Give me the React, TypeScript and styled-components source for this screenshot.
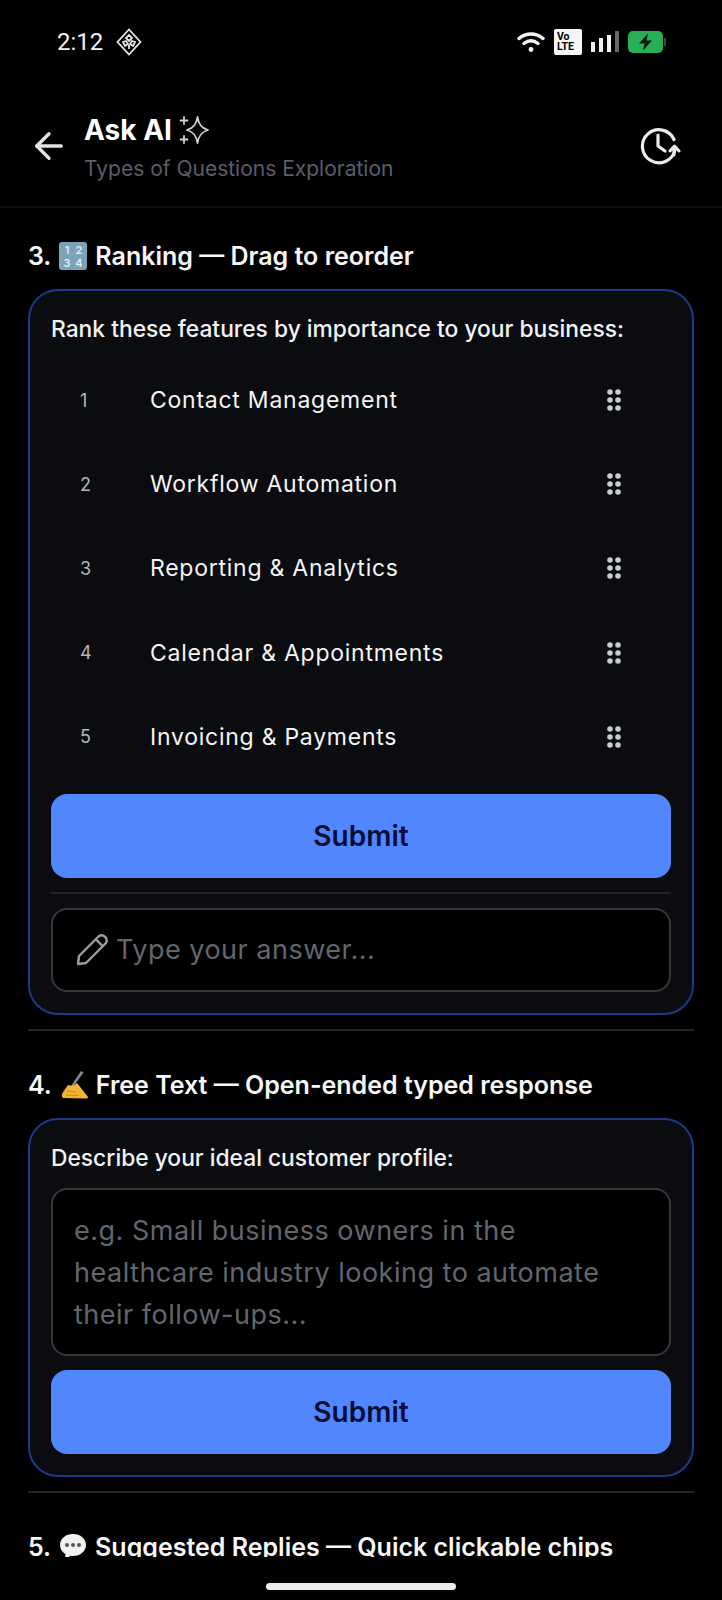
import React from "react";
import styled, { createGlobalStyle } from "styled-components";
import { ArrowLeft } from "lucide-react";

const GlobalStyle = createGlobalStyle`
  html, body {
    margin: 0;
    padding: 0;
    background: #000;
  }
  * {
    box-sizing: border-box;
  }
`;

const Screen = styled.div`
  width: 722px;
  height: 1600px;
  background: #000;
  color: #fff;
  font-family: Inter, "Noto Sans", sans-serif;
  display: flex;
  flex-direction: column;
  overflow: hidden;
`;

const StatusBar = styled.div`
  height: 84px;
  flex: none;
  padding: 26px 56px 0 57px;
  display: flex;
  justify-content: space-between;
  align-items: flex-start;
`;

const StatusGroup = styled.div`
  display: flex;
  align-items: center;
  height: 32px;
  gap: ${({ $gap }: { $gap: number }) => $gap}px;
`;

const Clock = styled.span`
  font-family: Roboto, sans-serif;
  font-size: 24px;
  color: #f2f2f2;
`;

const VoLte = styled.div`
  width: 28px;
  height: 26px;
  background: #f5f5f5;
  border-radius: 2px;
  color: #000;
  font-family: Roboto, sans-serif;
  font-size: 10.5px;
  font-weight: 700;
  line-height: 10px;
  padding: 3px 0 0 3px;
`;

const Header = styled.header`
  height: 124px;
  flex: none;
  padding: 0 41px 0 28px;
  display: flex;
  align-items: center;
  border-bottom: 2px solid #0b0c0d;
`;

const BackButton = styled.div`
  width: 56px;
  height: 42px;
  margin-top: 2px;
  flex: none;
  color: #e4e4e4;
`;

const TitleBlock = styled.div`
  flex: 1;
  display: flex;
  flex-direction: column;
  gap: 8px;
  margin-top: 3px;
`;

const TitleRow = styled.div`
  display: flex;
  align-items: center;
  gap: 6px;
  height: 36px;
`;

const Title = styled.h1`
  margin: 0;
  font-size: 28px;
  font-weight: 700;
  color: #fff;
`;

const Subtitle = styled.div`
  font-size: 21px;
  color: #595e69;
`;

const Scroller = styled.main`
  flex: 1;
  min-height: 0;
  overflow: hidden;
  padding: 32px 28px 0 28px;
`;

const SectionTitle = styled.h2`
  margin: 0 0 17px;
  height: 32px;
  display: flex;
  align-items: center;
  gap: 8px;
  font-size: 25px;
  line-height: 32px;
  font-weight: 600;
  color: #f7f7f7;
  white-space: nowrap;
`;

const Card = styled.section`
  background: #0a0c10;
  border: 2px solid #1c3a8a;
  border-radius: 30px;
  padding: 22px 21px 21px;
`;

const Prompt = styled.p`
  margin: 0;
  height: 32px;
  line-height: 32px;
  font-size: 22.8px;
  font-weight: 500;
  color: #f2f3f4;
  white-space: nowrap;
`;

const RankList = styled.ol`
  list-style: none;
  margin: 13px 0 15px;
  padding: 0;
`;

const RankRow = styled.li`
  height: 84.2px;
  display: flex;
  align-items: center;
`;

const RankNumber = styled.span`
  width: 99px;
  padding-left: 29px;
  font-size: 18px;
  color: #b4b7bc;
`;

const RankLabel = styled.span`
  flex: 1;
  font-size: 23px;
  letter-spacing: 0.75px;
  color: #f5f5f5;
`;

const Grip = styled.svg`
  margin-right: 50px;
  flex: none;
`;

const SubmitButton = styled.button`
  display: block;
  width: 100%;
  height: 84px;
  border: 0;
  border-radius: 16px;
  background: #5087ff;
  color: #060b38;
  font-family: inherit;
  font-size: 28px;
  font-weight: 600;
`;

const Rule = styled.hr`
  margin: ${({ $margin }: { $margin: string }) => $margin};
  border: 0;
  height: 2px;
  background: #232528;
`;

const AnswerBox = styled.div`
  height: 84px;
  background: #000;
  border: 2px solid #34373c;
  border-radius: 16px;
  display: flex;
  align-items: center;
  gap: 7px;
  padding: 0 22px;
  font-size: 27px;
  letter-spacing: 0.5px;
  color: #62666f;
`;

const TextArea = styled.div`
  height: 168px;
  margin: 14px 0;
  background: #000;
  border: 2px solid #34373c;
  border-radius: 16px;
  padding: 20px 21px;
  font-size: 27px;
  line-height: 42px;
  letter-spacing: 0.5px;
  color: #62666f;
`;

const HomeArea = styled.div`
  height: 43px;
  flex: none;
  display: flex;
  justify-content: center;
  padding-top: 26px;
`;

const HomeIndicator = styled.div`
  width: 190px;
  height: 7px;
  border-radius: 4px;
  background: #ececec;
`;

const GripIcon = () => (
  <Grip width="14" height="22" viewBox="0 0 14 22" fill="#c9cbce">
    {[3, 11, 19].map((cy) =>
      [3, 11].map((cx) => <circle key={`${cx}-${cy}`} cx={cx} cy={cy} r="2.8" />)
    )}
  </Grip>
);

const SparkleIcon = () => (
  <svg width="32" height="32" viewBox="0 0 32 32" fill="none" stroke="#cfd1d4" strokeWidth="1.800" strokeLinejoin="round" strokeLinecap="round">
    <path d="M19.500 3c1 7 3.500 11 10.500 13-7 2-9.500 6-10.500 13-1-7-3.500-11-10.500-13 7-2 9.500-6 10.500-13z" />
    <path d="M6 3v7M2.500 6.500h7M6 22v7M2.500 25.500h7" />
  </svg>
);

const HistoryIcon = () => (
  <svg width="42" height="42" viewBox="0 0 42 42" fill="none" stroke="#ececec" strokeWidth="3.200" strokeLinecap="round" strokeLinejoin="round">
    <path d="M35 15.500A16.500 16.500 0 1 0 36 26" />
    <path d="M19 11v11l7 5" />
    <path d="M35 31v-8M31 27l4.500-5 4.500 5" strokeWidth="3" />
  </svg>
);

const PencilIcon = () => (
  <svg width="34" height="34" viewBox="0 0 34 34" fill="none" stroke="#9a9da3" strokeWidth="2.400" strokeLinejoin="round" strokeLinecap="round">
    <path d="M23.500 3.500L4 23l-1 8 8-1 19.500-19.500a5 5 0 0 0-7-7z" />
    <path d="M21 6.500l6.500 6.500" />
  </svg>
);

const DiamondIcon = () => (
  <svg width="26" height="28" viewBox="0 0 26 28" fill="none" stroke="#e8e8e8" strokeWidth="1.800">
    <path d="M13 1.500L24.500 14 13 26.500 1.500 14z" />
    <path d="M13 7l3 3-3 3-3-3zM7 14l3-1 2 3-3 2zM19 14l-3-1-2 3 3 2zM13 17v4" />
  </svg>
);

const WifiIcon = () => (
  <svg width="28" height="22" viewBox="0 0 28 22" fill="none" stroke="#f5f5f5" strokeWidth="3.400" strokeLinecap="round">
    <path d="M2 7.500c7-6 17-6 24 0" />
    <path d="M7 12.500c4.500-3.500 9.500-3.500 14 0" />
    <circle cx="14" cy="18.500" r="2.400" fill="#f5f5f5" stroke="none" />
  </svg>
);

const SignalIcon = () => (
  <svg width="28" height="22" viewBox="0 0 28 22">
    <rect x="0" y="11" width="4" height="10" fill="#f0f0f0" />
    <rect x="8" y="7" width="4" height="14" fill="#f0f0f0" />
    <rect x="16" y="4" width="4" height="17" fill="#f0f0f0" />
    <rect x="24" y="0" width="4" height="21" fill="#6a6a6a" />
  </svg>
);

const BatteryIcon = () => (
  <svg width="38" height="22" viewBox="0 0 38 22">
    <rect x="0" y="0" width="35" height="22" rx="5" fill="#27ae57" />
    <rect x="36" y="7" width="2" height="8" fill="#444" />
    <path d="M20 2.500L11 12.500h5.500L15 19.500l9-10h-5.500z" fill="#0b1a0f" />
  </svg>
);

const NumbersEmoji = () => (
  <svg width="28" height="28" viewBox="0 0 28 28">
    <rect width="28" height="28" rx="3" fill="#7ba4ba" />
    <g fill="#e2ecf1" fontFamily="Inter, sans-serif" fontSize="11" fontWeight="600" textAnchor="middle">
      <text x="8" y="12">1</text>
      <text x="20" y="12">2</text>
      <text x="8" y="25">3</text>
      <text x="20" y="25">4</text>
    </g>
  </svg>
);

const WritingEmoji = () => (
  <svg width="28" height="30" viewBox="0 0 28 30">
    <path d="M21 1l2.500 1.500L13 17l-2-1z" fill="#7f8c9c" />
    <path d="M3 28c-1.500-1-1.500-3-.5-5L8 15l5 1 4-3 11 14c0 1-1 1.500-2 1.500z" fill="#f3b333" />
    <path d="M7 21l9 1M6 25l13 .5" stroke="#c98a1e" strokeWidth="1.200" fill="none" />
  </svg>
);

const ChatEmoji = () => (
  <svg width="28" height="30" viewBox="0 0 28 30">
    <path d="M14 2c7.500 0 13 4.800 13 11s-5.500 11-13 11c-1 0-2 0-3-.3C9.500 26 7 28 4.500 28.500c1.300-1.800 2-3.800 2-6.300C3 20 1 16.800 1 13 1 6.800 6.500 2 14 2z" fill="#f2f2f2" />
    <circle cx="8" cy="13" r="2" fill="#555" />
    <circle cx="14" cy="13" r="2" fill="#555" />
    <circle cx="20" cy="13" r="2" fill="#555" />
  </svg>
);

const rankItems = [
  "Contact Management",
  "Workflow Automation",
  "Reporting & Analytics",
  "Calendar & Appointments",
  "Invoicing & Payments",
];

export default function App() {
  return (
    <Screen>
      <GlobalStyle />
      <StatusBar>
        <StatusGroup $gap={13}>
          <Clock>2:12</Clock>
          <DiamondIcon />
        </StatusGroup>
        <StatusGroup $gap={9}>
          <WifiIcon />
          <VoLte>
            Vo
            <br />
            LTE
          </VoLte>
          <SignalIcon />
          <BatteryIcon />
        </StatusGroup>
      </StatusBar>

      <Header>
        <BackButton>
          <ArrowLeft size={42} strokeWidth={1.9} />
        </BackButton>
        <TitleBlock>
          <TitleRow>
            <Title>Ask AI</Title>
            <SparkleIcon />
          </TitleRow>
          <Subtitle>Types of Questions Exploration</Subtitle>
        </TitleBlock>
        <HistoryIcon />
      </Header>

      <Scroller>
        <SectionTitle>
          3. <NumbersEmoji /> Ranking — Drag to reorder
        </SectionTitle>
        <Card>
          <Prompt>Rank these features by importance to your business:</Prompt>
          <RankList>
            {rankItems.map((item, index) => (
              <RankRow key={item}>
                <RankNumber>{index + 1}</RankNumber>
                <RankLabel>{item}</RankLabel>
                <GripIcon />
              </RankRow>
            ))}
          </RankList>
          <SubmitButton>Submit</SubmitButton>
          <Rule $margin="14px 0" />
          <AnswerBox>
            <PencilIcon />
            Type your answer...
          </AnswerBox>
        </Card>
        <Rule $margin="14px 0 38px" />

        <SectionTitle>
          4. <WritingEmoji /> Free Text — Open-ended typed response
        </SectionTitle>
        <Card>
          <Prompt>Describe your ideal customer profile:</Prompt>
          <TextArea>
            e.g. Small business owners in the healthcare industry looking to automate their follow-ups...
          </TextArea>
          <SubmitButton>Submit</SubmitButton>
        </Card>
        <Rule $margin="14px 0 38px" />

        <SectionTitle>
          5. <ChatEmoji /> Suggested Replies — Quick clickable chips
        </SectionTitle>
      </Scroller>

      <HomeArea>
        <HomeIndicator />
      </HomeArea>
    </Screen>
  );
}
